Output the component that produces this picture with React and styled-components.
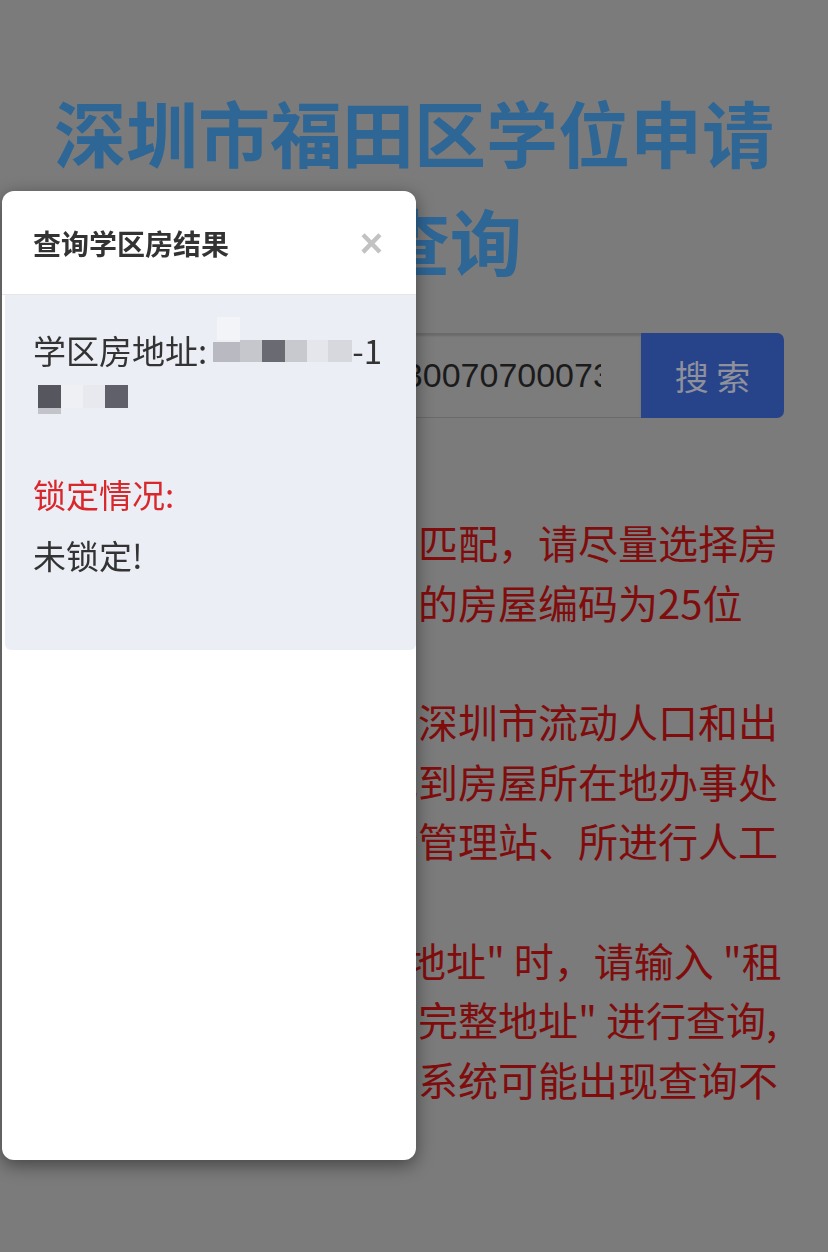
import React from "react";
import styled, { createGlobalStyle } from "styled-components";

const GlobalStyle = createGlobalStyle`
  html, body {
    margin: 0;
    padding: 0;
    background: #7b7b7b;
  }
  body {
    font-family: "Noto Sans CJK SC", "Noto Sans", sans-serif;
    min-height: 1252px;
  }
`;

const Page = styled.main`
  box-sizing: border-box;
  padding: 77px 44px 0;
  min-height: 1252px;
  background: #7b7b7b;
`;

const Title = styled.h1`
  margin: 0;
  font-size: 72px;
  line-height: 108px;
  font-weight: 700;
  color: #2e6696;
  text-align: center;
`;

const TitleTail = styled.span`
  padding-left: 72px;
`;

const SearchGroup = styled.form`
  display: flex;
  height: 85px;
  margin-top: 40px;
`;

const SearchInput = styled.input`
  flex: 1;
  min-width: 0;
  box-sizing: border-box;
  height: 85px;
  margin: 0;
  border: 1px solid #6a6a6a;
  border-right: 0;
  border-radius: 7px 0 0 7px;
  background: #7c7c7c;
  box-shadow: inset 0 2px 2px rgba(0, 0, 0, 0.14);
  padding: 0 40px 0 21px;
  font-family: "Liberation Sans", Arial, sans-serif;
  font-size: 34px;
  color: #1b1b1b;
  outline: none;
`;

const SearchButton = styled.button`
  width: 143px;
  height: 85px;
  margin: 0;
  border: 0;
  border-radius: 0 7px 7px 0;
  background: #27438a;
  color: #8e909c;
  font-family: "Noto Sans CJK SC", sans-serif;
  font-size: 34px;
  padding: 0;
  cursor: pointer;
`;

const Notice = styled.div`
  margin-top: 95px;
  padding-left: 14px;
  color: #800d0d;
  font-size: 40px;
  line-height: 59.67px;
`;

const NoticePara = styled.p`
  margin: 0;
`;

const NoticeLine = styled.span`
  display: block;
  white-space: nowrap;
`;

const Modal = styled.section`
  position: fixed;
  left: 2px;
  top: 191px;
  width: 414px;
  height: 969px;
  background: #ffffff;
  border-radius: 12px;
  box-shadow: 0 5px 18px rgba(0, 0, 0, 0.45);
  display: flex;
  flex-direction: column;
  overflow: hidden;
`;

const ModalHeader = styled.header`
  box-sizing: border-box;
  height: 104px;
  padding: 0 33px 0 31px;
  border-bottom: 1px solid #e6e6e6;
  display: flex;
  align-items: center;
  justify-content: space-between;
`;

const ModalTitle = styled.h4`
  margin: 0;
  font-size: 28px;
  line-height: 40px;
  font-weight: 600;
  color: #333333;
`;

const CloseButton = styled.button`
  border: 0;
  background: none;
  padding: 0;
  margin: 0;
  font-family: "Liberation Sans", Arial, sans-serif;
  font-weight: 700;
  font-size: 40px;
  line-height: 1;
  color: #c2c2c2;
  cursor: pointer;
`;

const ModalBody = styled.div`
  margin-left: 3px;
  padding: 33px 31px 72px 28px;
  background: #ebeef5;
  border-radius: 0 0 6px 6px;
  color: #333333;
  font-size: 33px;
  line-height: 45px;
`;

const Field = styled.p`
  margin: ${(p) => p.$top || 0}px 0 0;
  color: ${(p) => (p.$accent ? "#d9282c" : "#333333")};
`;

const Mosaic = styled.svg`
  display: inline-block;
  vertical-align: top;
  overflow: visible;
`;

const addressCells = [
  { x: 10, y: -11, w: 23, h: 23, c: "#f3f4f8" },
  { x: 6, y: 14, w: 27, h: 20, c: "#b9bac1" },
  { x: 33, y: 12, w: 22, h: 22, c: "#c6c7cd" },
  { x: 55, y: 12, w: 23, h: 22, c: "#6a6a73" },
  { x: 78, y: 12, w: 22, h: 22, c: "#c8c9ce" },
  { x: 100, y: 12, w: 21, h: 22, c: "#e4e6eb" },
  { x: 121, y: 12, w: 24, h: 22, c: "#d7d8dd" },
];

const addressCells2 = [
  { x: 5, y: 12, w: 23, h: 23, c: "#56565f" },
  { x: 28, y: 12, w: 22, h: 23, c: "#eff0f4" },
  { x: 50, y: 12, w: 22, h: 23, c: "#e7e9ee" },
  { x: 72, y: 12, w: 23, h: 23, c: "#60606a" },
  { x: 5, y: 35, w: 23, h: 6, c: "#c3c3ca" },
];

function MosaicBlock({ width, cells }) {
  return (
    <Mosaic width={width} height="45" viewBox={`0 0 ${width} 45`} aria-hidden="true">
      {cells.map((r, i) => (
        <rect key={i} x={r.x} y={r.y} width={r.w} height={r.h} fill={r.c} />
      ))}
    </Mosaic>
  );
}

export default function App() {
  return (
    <>
      <GlobalStyle />
      <Page>
        <Title>
          深圳市福田区学位申请
          <br />
          <TitleTail>查询</TitleTail>
        </Title>
        <SearchGroup onSubmit={(e) => e.preventDefault()}>
          <SearchInput readOnly value="44030400700411000030070700073001" />
          <SearchButton type="submit">搜 索</SearchButton>
        </SearchGroup>
        <Notice>
          <NoticePara>
            <NoticeLine>提示：地址无法精确匹配，请尽量选择房</NoticeLine>
            <NoticeLine>屋编码来查询，正确的房屋编码为25位</NoticeLine>
            <NoticeLine>数字。</NoticeLine>
          </NoticePara>
          <NoticePara>
            <NoticeLine>房屋编码可通过登录深圳市流动人口和出</NoticeLine>
            <NoticeLine>租屋系统上查询，或到房屋所在地办事处</NoticeLine>
            <NoticeLine>各社区的出租屋综合管理站、所进行人工</NoticeLine>
            <NoticeLine>查询。</NoticeLine>
          </NoticePara>
          <NoticePara>
            <NoticeLine>注：当查询 "出租屋地址" 时，请输入 "租</NoticeLine>
            <NoticeLine>赁合同或房产证上的完整地址" 进行查询,</NoticeLine>
            <NoticeLine>否则因地址不规范，系统可能出现查询不</NoticeLine>
            <NoticeLine>准确的情况。</NoticeLine>
          </NoticePara>
        </Notice>
      </Page>

      <Modal role="dialog" aria-label="查询学区房结果">
        <ModalHeader>
          <ModalTitle>查询学区房结果</ModalTitle>
          <CloseButton type="button" aria-label="关闭">×</CloseButton>
        </ModalHeader>
        <ModalBody>
          <Field>
            学区房地址:
            <MosaicBlock width={145} cells={addressCells} />
            -1
            <br />
            <MosaicBlock width={95} cells={addressCells2} />
          </Field>
          <Field $accent $top={53.5}>锁定情况:</Field>
          <Field $top={16.5}>未锁定!</Field>
        </ModalBody>
      </Modal>
    </>
  );
}
